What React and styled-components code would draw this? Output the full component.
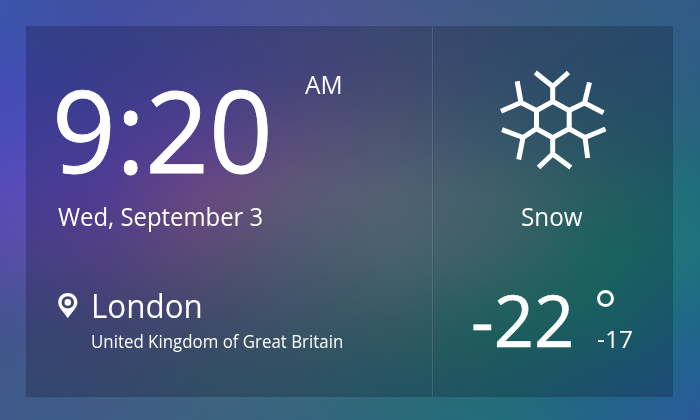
import React from 'react';
import styled, { createGlobalStyle } from 'styled-components';

const GlobalStyle = createGlobalStyle`
  * { box-sizing: border-box; }
  body { margin: 0; overflow: hidden; }
`;

// Colour mesh: one horizontal gradient per band, each fading in over the one above.
const bands = [
  [0, ['58,88,168', '65,80,160', '72,82,154', '76,86,149', '70,88,140', '62,90,132', '55,92,130', '50,92,136']],
  [70, ['66,78,180', '70,76,168', '78,80,165', '82,84,150', '80,92,136', '64,94,130', '52,94,127', '46,94,132']],
  [140, ['74,76,184', '88,76,184', '106,78,176', '110,98,150', '94,108,138', '68,108,130', '50,105,122', '38,100,125']],
  [190, ['88,76,184', '98,74,182', '136,90,160', '118,112,146', '102,122,142', '80,120,130', '50,116,118', '30,110,124']],
  [250, ['86,78,168', '102,80,162', '114,94,145', '98,112,138', '94,124,136', '74,120,124', '32,125,114', '32,114,124']],
  [320, ['68,84,145', '78,84,140', '80,93,132', '76,105,126', '66,112,122', '36,120,112', '32,118,118', '32,102,138']],
  [380, ['64,90,138', '68,88,132', '64,97,124', '58,102,120', '46,107,118', '38,107,117', '35,100,130', '36,96,150']],
  [420, ['62,92,140', '62,94,136', '60,98,130', '54,102,128', '42,106,122', '34,110,124', '36,100,140', '46,90,155']],
];

const Screen = styled.main`
  position: relative;
  width: 700px;
  height: 420px;
  padding: 26px 27px 23px 26px;
  overflow: hidden;
  color: #fff;
  font-family: 'Open Sans', sans-serif;
`;

const Band = styled.div`
  position: absolute;
  inset: 0;
  background: linear-gradient(90deg, ${p => p.$colors.map(c => `rgb(${c})`).join(', ')});
  mask-image: ${p => (p.$to ? `linear-gradient(180deg, transparent ${p.$from}px, #000 ${p.$to}px)` : 'none')};
`;

const Softener = styled.div`
  position: absolute;
  inset: 0;
  backdrop-filter: blur(14px);
`;

const Card = styled.section`
  position: relative;
  display: grid;
  grid-template-columns: 406px 1px 1fr;
  height: 371px;
  background: rgba(0, 0, 10, 0.2);
  box-shadow: inset 0 0 0 1px rgba(0, 0, 0, 0.03);
`;

const Divider = styled.div`
  background: rgba(255, 255, 255, 0.12);
  box-shadow: 1px 0 rgba(0, 0, 0, 0.1);
`;

const TimePanel = styled.div`
  padding: 37px 0 0 28px;
`;

const WeatherPanel = styled.div`
  padding-top: 43px;
`;

const Row = styled.div`
  display: flex;
  align-items: flex-start;
  height: ${p => p.$h}px;
  padding-left: ${p => p.$left || 0}px;
`;

const Text = styled.div`
  font-size: ${p => p.$size}px;
  line-height: ${p => p.$line}px;
  margin-top: ${p => p.$top || 0}px;
  margin-left: ${p => p.$left || 0}px;
  white-space: pre;
  width: max-content;
  transform: scaleX(${p => p.$stretch || 1});
  transform-origin: left center;
  -webkit-text-stroke: ${p => p.$stroke || 0}px #fff;
`;

const Pin = styled.svg`
  display: block;
  flex: none;
  width: 20px;
  height: 26px;
  margin: 14px 0 0 4px;
`;

const Flake = styled.svg`
  display: block;
  width: 110px;
  height: 104px;
  margin-left: 65px;
`;

const Degree = styled.div`
  width: 17px;
  height: 17px;
  border: 3.5px solid #fff;
  border-radius: 50%;
`;

const Side = styled.div`
  width: 40px;
  margin: 16px 0 0 25px;
`;

const Temp = styled.div`
  width: 101px;
`;

const Clock = styled.div`
  width: 251px;
`;

const Place = styled.div`
  width: 280px;
  padding-left: 13px;
`;

export default function App() {
  return (
    <Screen>
      <GlobalStyle />
      {bands.map(([y, colors], i) => (
        <Band key={y} $colors={colors} $from={i ? bands[i - 1][0] : 0} $to={y} />
      ))}
      <Softener />
      <Card>
        <TimePanel>
          <Row $h={132}>
            <Clock><Text $size={114} $line={104} $top={14} $left={-2.5} $stretch={0.98} $stroke={0.8}>9:20</Text></Clock>
            <Text $size={25.5} $line={32} $top={5} $stretch={0.965}>AM</Text>
          </Row>
          <Row $h={84} $left={4}>
            <Text $size={25} $line={32} $top={5} $stretch={0.955}>Wed, September 3</Text>
          </Row>
          <Row $h={90}>
            <Pin viewBox="0 0 20 26" fill="none">
              <path fill="#fff" fillRule="evenodd" d="M9.8 0C4.2 0 .2 4.100.2 9.400.2 14.500 5.500 18.500 9.800 25.200 14.100 18.500 19.400 14.500 19.400 9.400 19.400 4.100 15.400 0 9.800 0ZM9.800 3.200A6.200 6.200 0 1 1 9.800 15.600 6.200 6.200 0 0 1 9.800 3.200Z" />
              <circle cx="9.8" cy="9.4" r="3.3" fill="#fff" />
            </Pin>
            <Place>
              <Text $size={32} $line={40} $top={7} $stretch={0.98}>London</Text>
              <Text $size={18} $line={24} $top={3} $stretch={0.937}>United Kingdom of Great Britain</Text>
            </Place>
          </Row>
        </TimePanel>
        <Divider />
        <WeatherPanel>
          <Row $h={126}>
            <Flake viewBox="498 69 110 104" fill="none" stroke="#fff" strokeWidth="5" strokeLinejoin="miter">
              <path d="M552.700 101.500L569.200 110.500V128.700L552.700 137.700L536.500 128.700V110.500Z" />
              <path d="M535.300 72.500L552.700 86.500L568.500 72.500M552.700 86V102M552.700 137V155M538.500 167.500L552.700 154L570.800 167.500" />
              <path d="M536.500 110.500L521 102.500L517.200 81.300M521 102.500L501 111.200M569 110.500L584.500 103L589.500 82.300M584.500 103L603.500 112.800" />
              <path d="M536.500 128.700L523 137.500L518.700 159.500M523 137.500L502 129.600M569 128.700L585 137.500L587.700 158M585 137.500L605.500 129" />
            </Flake>
          </Row>
          <Row $h={79} $left={88}>
            <Text $size={25} $line={32} $top={5} $stretch={0.97}>Snow</Text>
          </Row>
          <Row $h={100} $left={38}>
            <Temp><Text $size={71.5} $line={90} $top={1} $stroke={0.6} $stretch={0.985}>-22</Text></Temp>
            <Side>
              <Degree />
              <Text $size={24.5} $line={32} $top={16}>-17</Text>
            </Side>
          </Row>
        </WeatherPanel>
      </Card>
    </Screen>
  );
}
